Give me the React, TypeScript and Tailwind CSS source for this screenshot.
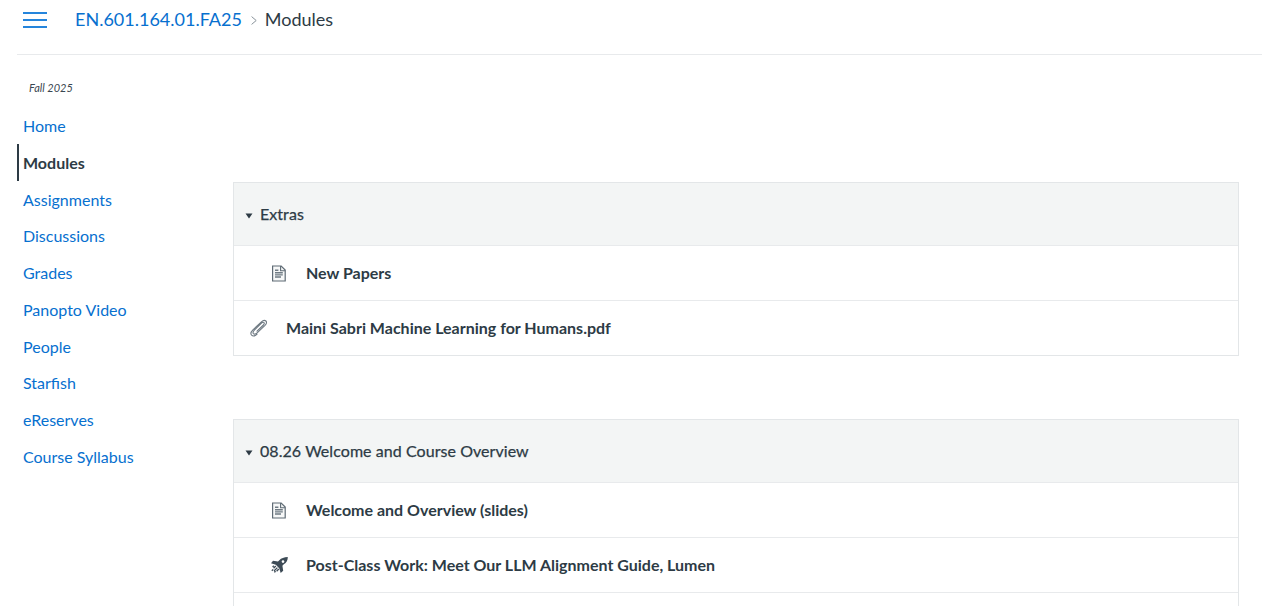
import React from "react";

const navItems = ["Home", "Modules", "Assignments", "Discussions", "Grades", "Panopto Video", "People", "Starfish", "eReserves", "Course Syllabus"];

function PageIcon() {
  return (
    <svg width="16" height="17" viewBox="0 0 16 17" fill="none" className="block">
      <path d="M1.6 1h8.6l4 4v11H1.6z" fill="#f7f8f8" stroke="#5f6b75" strokeWidth="1.2" />
      <path d="M9.6 1v4.8h4.6" stroke="#5f6b75" strokeWidth="1.1" />
      <path d="M4 5.2h3.4M4 7.8h7.8M4 9.9h7.8M4 12h6" stroke="#6f7a83" strokeWidth="1.4" />
    </svg>
  );
}

function ClipIcon() {
  return (
    <svg width="18" height="18" viewBox="0 0 18 18" fill="none" className="block">
      <path
        d="M7 12.2 13.4 6c.9-.9 1.1-1.8.6-2.3-.6-.6-1.6-.4-2.5.5L4.6 10.8C3.1 12.3 2.7 13.8 3.4 14.6c.9.9 2.5.5 4-1L15 6.4c1.5-1.5 2-3.4.9-4.4-1.1-1-3-.6-4.5.8L2.9 10.9C1 12.8.5 15 1.6 16.2c1.3 1.2 3.6.7 5.5-1.1"
        stroke="#6f7a83"
        strokeWidth="1.1"
        strokeLinecap="round"
      />
    </svg>
  );
}

function RocketIcon() {
  return (
    <svg width="17" height="16" viewBox="0 0 17 16" className="block">
      <path d="M16.8 0C13 .1 10.3 1.2 8.3 3.2L7 4.6 2 3.8 0 6.2l4.8 1.6 3.4 3.5 1.5 4.7 2.5-2.3-.8-5 1.4-1.4C15.6 5.6 16.8 3.2 16.8 0z" fill="#3d4b56" />
      <circle cx="12" cy="4.6" r="1.3" fill="#fff" />
      <path d="M4.8 9 2.6 11.2M2.8 8.8l-1.2 1.2M6.4 10.6 3 14M2.2 12.4l-1.4 1.4M7.8 12 5.6 14.2M4.6 14.2l-1.2 1.2" stroke="#3d4b56" strokeWidth="1.3" />
    </svg>
  );
}

function Row({ icon, title, attach }: { icon: React.ReactNode; title: string; attach?: boolean }) {
  return (
    <div className="h-[55px] flex items-center border-t border-[#e8eaec]">
      <div className={attach ? "w-[52px] pl-[16px] flex" : "w-[72px] pl-[37px] flex"}>{icon}</div>
      <span className="text-[16px] font-bold text-[#2d3b45]">{title}</span>
    </div>
  );
}

function ModuleHeader({ title }: { title: string }) {
  return (
    <div className="h-[62px] flex items-center bg-[#f3f5f5] pl-[11px]">
      <svg width="8" height="6" viewBox="0 0 8 6" className="block mt-[3px]">
        <path d="M0.5 0.5h7L4 5.5z" fill="#2d3b45" />
      </svg>
      <span className="ml-[7px] text-[16px] font-normal tracking-[0.06px] text-[#2d3b45] [-webkit-text-stroke:0.25px_#2d3b45]">{title}</span>
    </div>
  );
}

export default function App() {
  return (
    <div className="h-[606px] overflow-hidden bg-white pl-[17px] pr-[9px] font-['Lato','Noto_Sans',sans-serif] text-[#2d3b45]">
      <header className="h-[55px] border-b border-[#e8eaec] flex items-start">
        <div className="ml-[6px] mt-[12px] w-[24px] flex flex-col gap-[5px]">
          <span className="h-[2px] bg-[#2585dc]" />
          <span className="h-[2px] bg-[#2585dc]" />
          <span className="h-[2px] bg-[#2585dc]" />
        </div>
        <nav className="ml-[28px] mt-[6px] flex items-center text-[18px] leading-[26px]">
          <span className="text-[#0770cf]">EN.601.164.01.FA25</span>
          <svg width="6" height="9" viewBox="0 0 6 9" fill="none" className="block ml-[9px] mr-[8px] mt-[3px]">
            <path d="M.6.6 5.2 4.5.6 8.4" stroke="#88929a" strokeWidth="1" />
          </svg>
          <span>Modules</span>
        </nav>
      </header>
      <div className="flex items-start">
        <aside className="w-[216px] shrink-0">
          <div className="pl-[12px] pt-[26px] text-[11px] leading-[14px] italic h-[52.7px] text-[#3a4751]">Fall 2025</div>
          <ul>
            {navItems.map((item) => (
              <li
                key={item}
                className={
                  item === "Modules"
                    ? "h-[36.75px] flex items-center pl-[4px] border-l-2 border-[#2d3b45] text-[16px] font-bold"
                    : "h-[36.75px] flex items-center pl-[6px] text-[16px] text-[#0770cf]"
                }
              >
                {item}
              </li>
            ))}
          </ul>
        </aside>
        <main className="flex-1 mr-[23px] pt-[127px] flex flex-col gap-[63px]">
          <section className="border border-[#e3e6e8]">
            <ModuleHeader title="Extras" />
            <Row icon={<PageIcon />} title="New Papers" />
            <Row icon={<ClipIcon />} title="Maini Sabri Machine Learning for Humans.pdf" attach />
          </section>
          <section className="border border-[#e3e6e8]">
            <ModuleHeader title="08.26 Welcome and Course Overview" />
            <Row icon={<PageIcon />} title="Welcome and Overview (slides)" />
            <Row icon={<RocketIcon />} title="Post-Class Work: Meet Our LLM Alignment Guide, Lumen" />
            <Row icon={null} title="" />
          </section>
        </main>
      </div>
    </div>
  );
}
